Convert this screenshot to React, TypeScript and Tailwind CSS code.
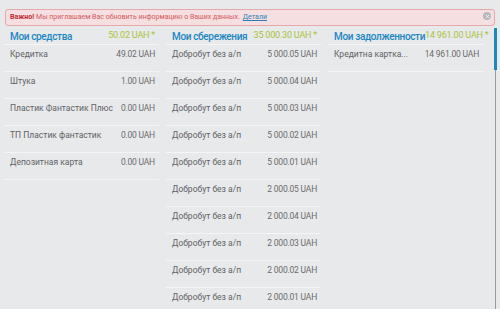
import React from "react";

const col1 = [
  ["Кредитка", "49.02 UAH"],
  ["Штука", "1.00 UAH"],
  ["Пластик Фантастик Плюс", "0.00 UAH"],
  ["ТП Пластик фантастик", "0.00 UAH"],
  ["Депозитная карта", "0.00 UAH"],
];
const col2 = [
  "5 000.05 UAH",
  "5 000.04 UAH",
  "5 000.03 UAH",
  "5 000.02 UAH",
  "5 000.01 UAH",
  "2 000.05 UAH",
  "2 000.04 UAH",
  "2 000.03 UAH",
  "2 000.02 UAH",
  "2 000.01 UAH",
].map((v) => ["Добробут без а/п", v]);
const col3 = [["Кредитна картка...", "14 961.00 UAH"]];

function Column({ title, total, rows }: { title: string; total: string; rows: string[][] }) {
  return (
    <div className="w-[155px] flex flex-col">
      <div className="h-[17px] flex items-center justify-between pl-[6px] pr-[4px] border-b border-[#f6f6f7]">
        <span className="text-[10px] font-medium text-[#1c86c3] whitespace-nowrap tracking-[-0.35px]">{title}</span>
        <span className="text-[9px] text-[#a9c43c] whitespace-nowrap tracking-[-0.2px]">{total}</span>
      </div>
      {rows.map(([n, v], i) => (
        <div
          key={i}
          className="h-[27px] flex justify-between pl-[6px] pr-[4px] pt-[3px] border-b border-[#f5f5f6] text-[8.5px] text-[#606265]"
        >
          <span className="whitespace-nowrap">{n}</span>
          <span className="whitespace-nowrap text-[#686a6d] tracking-[-0.2px]">{v}</span>
        </div>
      ))}
    </div>
  );
}

export default function App() {
  return (
    <div className="w-[500px] h-[309px] bg-[#e8e9eb] overflow-hidden relative" style={{ fontFamily: "Roboto, 'Liberation Sans', sans-serif" }}>
      <div className="pt-[9px] px-[5px]">
        <div className="h-[17px] rounded-[3px] border border-[#e3a9ab] bg-[#f6dfe0] flex items-center pl-[4px] relative text-[7px] text-[#d2595e]">
          <span className="font-bold text-[#c0282e] mr-[2px]">Важно!</span>
          <span>Мы приглашаем Вас обновить информацию о Ваших данных.</span>
          <span className="ml-[3px] underline text-[#2a7fb8]">Детали</span>
          <div className="absolute right-[3px] top-[2px] w-[8px] h-[8px] rounded-full bg-[#b9b9bb] flex items-center justify-center">
            <svg width="5" height="5" viewBox="0 0 5 5">
              <path d="M1 1 L4 4 M4 1 L1 4" stroke="#f2f2f2" strokeWidth="1" />
            </svg>
          </div>
        </div>
      </div>
      <div className="flex gap-[7px] pl-[4px] pt-[2px]">
        <Column title="Мои средства" total="50.02 UAH *" rows={col1} />
        <Column title="Мои сбережения" total="35 000.30 UAH *" rows={col2} />
        <Column title="Мои задолженности" total="14 961.00 UAH *" rows={col3} />
      </div>
      <div className="absolute left-[493px] top-[28px] bottom-0 w-[4px] flex flex-col items-center">
        <div className="w-[3px] h-[42px] bg-[#1e88ba]" />
        <div className="w-[1px] flex-1 bg-[#9a9b9d]" />
      </div>
    </div>
  );
}
